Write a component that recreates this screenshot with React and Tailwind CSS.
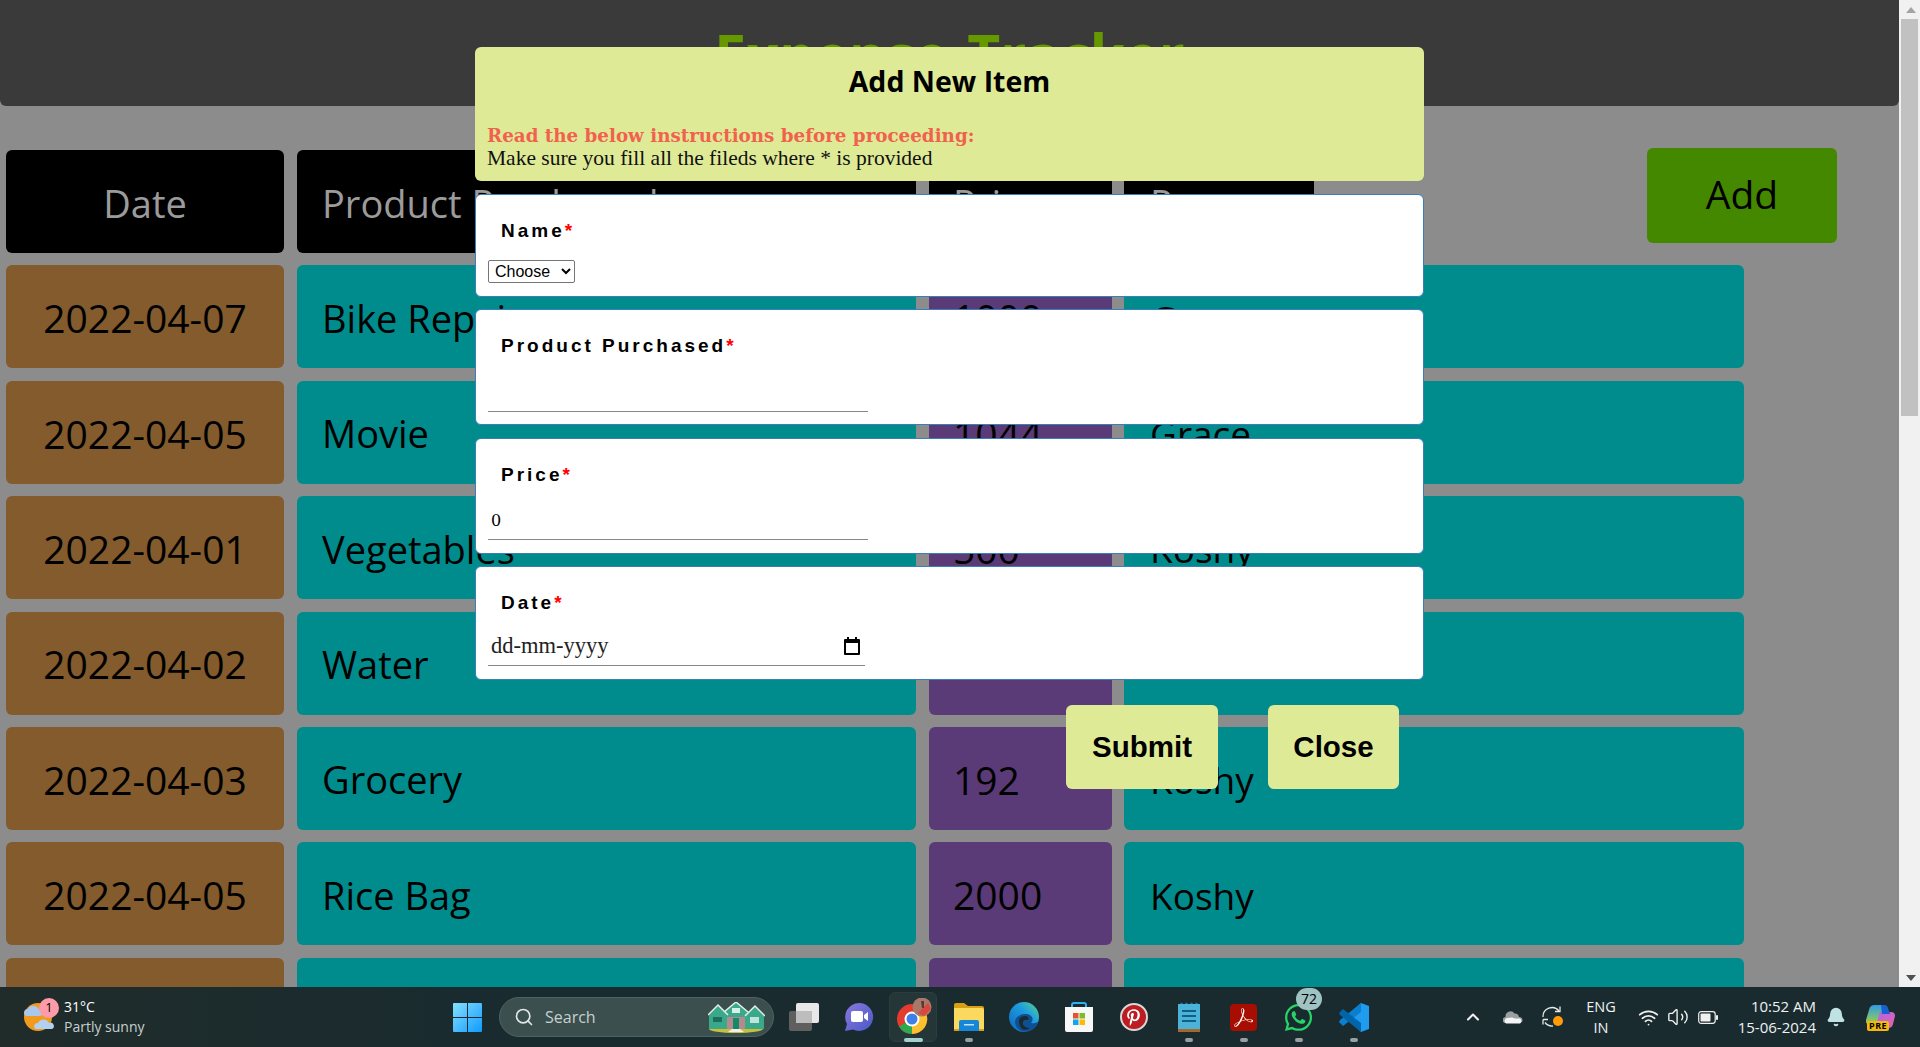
import React from 'react';
import { Search, ChevronUp, Wifi, Volume2, Bell } from 'lucide-react';
import { FaPinterestP, FaWhatsapp } from 'react-icons/fa';
import { SiAdobeacrobatreader } from 'react-icons/si';

const rows = [
    { date: '2022-04-07', product: 'Bike Repair', price: '1000', by: 'Grace' },
    { date: '2022-04-05', product: 'Movie', price: '1044', by: 'Grace' },
    { date: '2022-04-01', product: 'Vegetables', price: '500', by: 'Koshy' },
    { date: '2022-04-02', product: 'Water', price: '', by: '' },
    { date: '2022-04-03', product: 'Grocery', price: '192', by: 'Koshy' },
    { date: '2022-04-05', product: 'Rice Bag', price: '2000', by: 'Koshy' },
    { date: '', product: '', price: '', by: '' },
];

const Row = ({ item }) => (
    <div className="flex h-[103px] shrink-0 text-[38px] text-black">
        <div className="w-[278px] rounded-md bg-[#835b2c] flex items-center justify-center pt-[3px] text-[39px]">{item.date}</div>
        <div className="ml-[13px] w-[619px] rounded-md bg-[#008c8c] flex items-center pl-[25px] pt-[3px]">{item.product}</div>
        <div className="ml-[13px] w-[183px] rounded-md bg-[#5b3a78] flex items-center pl-[24px] pt-[3px] text-[39px]">{item.price}</div>
        <div className="ml-[12px] w-[620px] rounded-md bg-[#008c8c] flex items-center pl-[26px] pt-[3px] text-[37px]">{item.by}</div>
    </div>
);

const Label = ({ text }) => (
    <label className="block pl-[13px] h-[24px] leading-[24px] text-[19px] font-bold tracking-[3px] text-black font-['Liberation_Sans',sans-serif]">
        {text}<span className="text-[#ff0000]">*</span>
    </label>
);

const Card = ({ className, children }) => (
    <div className={`rounded-md border border-[#3b7fb8] bg-white pl-[12px] pt-[24px] ${className}`}>{children}</div>
);

const Modal = () => (
    <div className="absolute left-[475px] top-[47px] z-10 flex w-[949px] flex-col">
        <div className="h-[134px] rounded-md bg-[#dfea96] pt-[14px]">
            <h2 className="text-center h-[40px] leading-[40px] text-[28.5px] font-bold text-black">Add New Item</h2>
            <p className="mt-[24px] pl-[12px] h-[22px] leading-[22px] text-[18.3px] font-bold text-[#f0624f] font-['DejaVu_Serif',serif]">Read the below instructions before proceeding:</p>
            <p className="pl-[12px] h-[22px] leading-[22px] text-[21.5px] text-[#111] font-['Liberation_Serif',serif]">Make sure you fill all the fileds where * is provided</p>
        </div>

        <Card className="mt-[13px] h-[103px]">
            <Label text="Name" />
            <select defaultValue="Choose" className="mt-[17px] block h-[23px] w-[87px] rounded-[2px] border border-[#767676] pl-[2px] text-[16px] text-black font-['Liberation_Sans',sans-serif]">
                <option>Choose</option>
            </select>
        </Card>

        <Card className="mt-[12px] h-[116px]">
            <Label text="Product Purchased" />
            <input type="text" className="mt-[20px] block h-[34px] w-[380px] border-b-[1.5px] border-[#888] outline-none" />
        </Card>

        <Card className="mt-[13px] h-[116px]">
            <Label text="Price" />
            <input type="text" defaultValue="0" className="mt-[19px] block h-[34px] w-[380px] border-b-[1.5px] border-[#888] pl-[3px] pb-[4px] text-[16px] text-black outline-none font-['DejaVu_Serif',serif]" />
        </Card>

        <Card className="mt-[12px] h-[114px]">
            <Label text="Date" />
            <div className="mt-[17px] flex h-[34px] w-[377px] items-center justify-between border-b-[1.5px] border-[#888] pb-[5px] pl-[3px] pr-[5px] text-[22.5px] text-[#222] font-['Liberation_Serif',serif]">
                <span>dd-mm-yyyy</span>
                <svg width="16" height="18" viewBox="0 0 16 18">
                    <path d="M3 0h2v2h6V0h2v2h2a1 1 0 0 1 1 1v14a1 1 0 0 1-1 1H1a1 1 0 0 1-1-1V3a1 1 0 0 1 1-1h2zM2 6v10h12V6z" fill="#000" />
                </svg>
            </div>
        </Card>

        <div className="mt-[25px] flex pl-[591px] text-[29.5px] font-bold text-black font-['Liberation_Sans',sans-serif]">
            <button className="h-[84px] w-[152px] rounded-md bg-[#dfea96] pt-[1px]">Submit</button>
            <button className="ml-[50px] h-[84px] w-[131px] rounded-md bg-[#dfea96] pt-[1px]">Close</button>
        </div>
    </div>
);

const Scrollbar = () => (
    <div className="flex w-[21px] shrink-0 flex-col bg-[#f1f1f1] pl-[2px]">
        <div className="flex h-[19px] items-center justify-center">
            <div className="h-0 w-0 border-x-[5px] border-b-[6px] border-x-transparent border-b-[#a3a3a3]" />
        </div>
        <div className="h-[397px] w-[17px] bg-[#c1c1c1]" />
        <div className="mt-auto flex h-[19px] items-center justify-center">
            <div className="h-0 w-0 border-x-[5px] border-t-[6px] border-x-transparent border-t-[#505050]" />
        </div>
    </div>
);

const TaskIcon = ({ children, dot, active }) => (
    <div className="relative flex h-full w-[55px] shrink-0 items-center justify-center">
        {active && <div className="absolute left-[3px] top-[5px] h-[50px] w-[48px] rounded-md border border-[#2c3d40] bg-[#253639]" />}
        <div className="relative flex items-center justify-center">{children}</div>
        {dot && <div className={`absolute top-[51px] h-[4px] rounded-full ${active ? 'w-[19px] bg-[#a5d0d0]' : 'w-[8px] bg-[#9a9f9f]'}`} />}
    </div>
);

const WindowsLogo = () => (
    <svg width="29" height="29" viewBox="0 0 29 29">
        <defs>
            <linearGradient id="win" x1="0" y1="0" x2="1" y2="1">
                <stop offset="0" stopColor="#86e0ff" />
                <stop offset="1" stopColor="#0f9bff" />
            </linearGradient>
        </defs>
        <path d="M0 1a1 1 0 0 1 1-1h13v14H0zM15 0h13a1 1 0 0 1 1 1v13H15zM0 15h14v14H1a1 1 0 0 1-1-1zM15 15h14v13a1 1 0 0 1-1 1H15z" fill="url(#win)" />
    </svg>
);

const Houses = () => (
    <svg width="57" height="31" viewBox="0 0 57 31">
        <ellipse cx="28" cy="27" rx="27" ry="4" fill="#c4c23a" />
        <path d="M1 12 L10 3 L19 12 V27 H1Z" fill="#3aa88a" />
        <path d="M38 13 L47 4 L56 13 V27 H38Z" fill="#3aa88a" />
        <path d="M17 9 L28 0 L39 9 V27 H17Z" fill="#3aa88a" />
        <path d="M0 13 L10 3 L20 13 M16 10 L28 0 L40 10 M37 14 L47 4 L57 14" fill="none" stroke="#e8efe9" strokeWidth="1.5" />
        <rect x="19" y="15" width="18" height="12" fill="#b48a90" />
        <rect x="25" y="16" width="6" height="11" fill="#128a68" />
        <rect x="24" y="6" width="8" height="5" fill="#d8efe8" />
        <rect x="5" y="15" width="9" height="5" fill="#1e6e5c" />
        <rect x="42" y="15" width="9" height="6" fill="#bfe4dc" />
        <path d="M24 27 h8 l4 3 h-16z" fill="#f0f0e8" />
    </svg>
);

const TaskView = () => (
    <svg width="30" height="28" viewBox="0 0 30 28">
        <rect x="0" y="8" width="23" height="20" rx="2" fill="#5f5f5f" />
        <rect x="7" y="0" width="23" height="20" rx="2" fill="#e8e8e8" />
        <rect x="7" y="8" width="16" height="12" fill="#bdbdbd" />
    </svg>
);

const Meet = () => (
    <svg width="30" height="30" viewBox="0 0 30 30">
        <defs>
            <linearGradient id="meet" x1="0" y1="0" x2="1" y2="1">
                <stop offset="0" stopColor="#8a78dd" />
                <stop offset="1" stopColor="#4a58c8" />
            </linearGradient>
        </defs>
        <path d="M15 1a14 14 0 1 1-6 26.6L1 29l2-7A14 14 0 0 1 15 1z" fill="url(#meet)" />
        <rect x="7" y="9" width="12" height="11" rx="2" fill="#fff" />
        <path d="M20 13l4-3v9l-4-3z" fill="#fff" />
    </svg>
);

const Chrome = () => (
    <svg width="36" height="38" viewBox="0 0 36 38">
        <circle cx="16" cy="21" r="15" fill="#e33b2e" />
        <path d="M16 21 L3 28.5 A15 15 0 0 0 16 36 L 23.5 24Z" fill="#2fa84f" />
        <path d="M16 21 L16 36 A15 15 0 0 0 30 15 L 16 15Z" fill="#fbc02d" />
        <circle cx="16" cy="21" r="7.5" fill="#fff" />
        <circle cx="16" cy="21" r="5.5" fill="#3f7fe8" />
        <circle cx="26" cy="9" r="9.5" fill="#a8786a" />
        <path d="M22 15 L32 5 L35 11 L28 18Z" fill="#d9473f" />
        <path d="M25 3 h3 v7 h-2z" fill="#5a3a35" />
    </svg>
);

const Folder = () => (
    <svg width="30" height="30" viewBox="0 0 30 30">
        <path d="M0 3a2 2 0 0 1 2-2h8l4 3h14a2 2 0 0 1 2 2v3H0z" fill="#d9a013" />
        <path d="M0 6h28a2 2 0 0 1 2 2v20H0z" fill="#fbd95f" />
        <rect x="0" y="27" width="30" height="2" fill="#d9a013" />
        <path d="M5 29v-9a2 2 0 0 1 2-2h16a2 2 0 0 1 2 2v9z" fill="#1687d8" />
        <rect x="10" y="22" width="10" height="1.5" fill="#bfe3f7" />
    </svg>
);

const Edge = () => (
    <svg width="30" height="30" viewBox="0 0 30 30">
        <defs>
            <linearGradient id="edgeA" x1="0" y1="1" x2="1" y2="0">
                <stop offset="0" stopColor="#0c67b8" />
                <stop offset="0.6" stopColor="#1e9be0" />
                <stop offset="1" stopColor="#58d58a" />
            </linearGradient>
        </defs>
        <circle cx="15" cy="15" r="15" fill="url(#edgeA)" />
        <path d="M30 17c0 4-5 5-8 4 3-3 2-9-6-9-6 0-10 4-10 8 0 5 5 10 11 9.6C24 29 29 24 30 17z" fill="#0f4f93" />
        <path d="M10 19c0-3 3-5 6-5 3 0 4 2 3 4-2-1-6 0-5 4 .5 2 3 4 7 4-3 2-6 2-8 1-2-2-3-5-3-8z" fill="#1a2b2f" />
    </svg>
);

const Store = () => (
    <svg width="30" height="31" viewBox="0 0 30 31">
        <path d="M8 7V3a2 2 0 0 1 2-2h10a2 2 0 0 1 2 2v4" fill="none" stroke="#2fb0ef" strokeWidth="2" />
        <path d="M1 5h28v23a2 2 0 0 1-2 2H3a2 2 0 0 1-2-2z" fill="#f7f7f7" />
        <rect x="9" y="11" width="5.5" height="5.5" fill="#e8552d" />
        <rect x="15.5" y="11" width="5.5" height="5.5" fill="#7fba2a" />
        <rect x="9" y="17.5" width="5.5" height="5.5" fill="#10a5ef" />
        <rect x="15.5" y="17.5" width="5.5" height="5.5" fill="#ffb900" />
    </svg>
);

const Notepad = () => (
    <svg width="22" height="30" viewBox="0 0 22 30">
        <rect x="0" y="2" width="22" height="25" fill="#4bb3d8" />
        <rect x="0" y="27" width="22" height="3" fill="#a5682a" />
        <path d="M2 2a1.5 1.5 0 0 1 3 0M7 2a1.5 1.5 0 0 1 3 0M12 2a1.5 1.5 0 0 1 3 0M17 2a1.5 1.5 0 0 1 3 0" fill="#1b6f96" />
        <rect x="4" y="8" width="14" height="2" fill="#125e86" />
        <rect x="4" y="13" width="14" height="2" fill="#125e86" />
        <rect x="4" y="18" width="14" height="2" fill="#125e86" />
    </svg>
);

const VsCode = () => (
    <svg width="30" height="31" viewBox="0 0 30 31">
        <path d="M22 1 L30 4 V27 L22 30 L9 17 V14z" fill="#1f9cf0" />
        <path d="M22 1 L1 18 L0 20 L4 24 L22 10z" fill="#0a7fd0" />
        <path d="M22 30 L1 13 L0 11 L4 7 L22 21z" fill="#0065a9" />
    </svg>
);

const OneDrive = () => (
    <svg width="20" height="14" viewBox="0 0 20 14">
        <path d="M3 13a3 3 0 0 1-.5-6 5 5 0 0 1 9-3.5A4 4 0 0 1 16 7a3 3 0 0 1 1 6z" fill="#9a9f9f" />
        <path d="M3 13.5a3 3 0 0 1 1-5.5l5-.5 3 1 5 0a3 3 0 0 1 0 5z" fill="#f4f4f4" />
    </svg>
);

const Sync = () => (
    <svg width="22" height="22" viewBox="0 0 22 22" fill="none" stroke="#e4e8e8" strokeWidth="1.3">
        <path d="M1 11a9 9 0 0 1 16-6" />
        <path d="M18 0.5v5h-5" />
        <path d="M11 20a9 9 0 0 1-8-3.5" />
        <path d="M1 13.5h5M1 13.5v5" />
        <circle cx="16" cy="15" r="5" fill="#ff9a0a" stroke="none" />
    </svg>
);

const Battery = () => (
    <svg width="20" height="13" viewBox="0 0 20 13" fill="none">
        <rect x="0.7" y="0.7" width="16.5" height="11.6" rx="2.5" stroke="#f0f0f0" strokeWidth="1.2" />
        <rect x="2.5" y="2.5" width="10" height="8" rx="1" fill="#f0f0f0" />
        <rect x="18" y="4" width="2" height="5" rx="1" fill="#f0f0f0" />
    </svg>
);

const Copilot = () => (
    <svg width="29" height="25" viewBox="0 0 29 25">
        <defs>
            <linearGradient id="copA" x1="0" y1="0" x2="0" y2="1">
                <stop offset="0" stopColor="#2f9be8" />
                <stop offset="1" stopColor="#a5d43a" />
            </linearGradient>
            <linearGradient id="copB" x1="0" y1="0" x2="1" y2="1">
                <stop offset="0" stopColor="#a56be8" />
                <stop offset="1" stopColor="#ef5da8" />
            </linearGradient>
        </defs>
        <path d="M9 0h10l-7 20H4a4 4 0 0 1-4-5l3-10a6 6 0 0 1 6-5z" fill="url(#copA)" />
        <path d="M14 7h11a4 4 0 0 1 4 4l-2 8a5 5 0 0 1-5 4H9z" fill="url(#copB)" />
        <path d="M15 0h3a4 4 0 0 1 4 3l2 6h-8z" fill="#1a5fd0" />
    </svg>
);

const Taskbar = () => (
    <div className="flex h-[60px] shrink-0 items-center bg-[#1a2b2f] text-white font-['Open_Sans',sans-serif]">
        <div className="flex h-full w-[449px] shrink-0 items-center bg-gradient-to-r from-[#1f2c2a] to-[#1a2b2f] pl-[23px]">
            <div className="relative h-[34px] w-[41px] shrink-0">
                <svg width="32" height="34" viewBox="0 0 32 34">
                    <circle cx="15" cy="17" r="14" fill="#f09a1e" />
                    <path d="M1 13a4 4 0 0 1 4-4 6 6 0 0 1 11 1 3 3 0 0 1 1 6H3a3 3 0 0 1-2-3z" fill="#a9c8ee" />
                    <path d="M11 27a4 4 0 0 1 4-4 6 6 0 0 1 11 0 3 3 0 0 1 3 6H13a3 3 0 0 1-2-2z" fill="#b4d0f0" />
                </svg>
                <span className="absolute left-[16px] -top-[2px] flex h-[20px] w-[20px] items-center justify-center rounded-full bg-[#ff9aa8] text-[13px] text-black">1</span>
            </div>
            <div className="leading-[20px]">
                <div className="text-[14px] text-white">31°C</div>
                <div className="text-[14px] text-[#c8cfd0]">Partly sunny</div>
            </div>
        </div>

        <div className="flex w-[36px] shrink-0 justify-center"><WindowsLogo /></div>

        <div className="ml-[14px] flex h-[40px] w-[275px] shrink-0 items-center rounded-full border border-[#4d6361] bg-[#3a4f4e] pl-[14px] pr-[8px]">
            <Search size={20} strokeWidth={2} className="text-[#e0e6e6]" />
            <span className="ml-[11px] text-[16px] text-[#c7d0cf]">Search</span>
            <div className="ml-auto"><Houses /></div>
        </div>

        <div className="ml-[2px] flex h-full shrink-0">
            <TaskIcon><TaskView /></TaskIcon>
            <TaskIcon><Meet /></TaskIcon>
            <TaskIcon dot active><Chrome /></TaskIcon>
            <TaskIcon dot><Folder /></TaskIcon>
            <TaskIcon><Edge /></TaskIcon>
            <TaskIcon><Store /></TaskIcon>
            <TaskIcon>
                <div className="flex h-[28px] w-[28px] items-center justify-center rounded-full border-2 border-[#d8d8d8] bg-[#bd1c22] text-white">
                    <FaPinterestP size={17} />
                </div>
            </TaskIcon>
            <TaskIcon dot><Notepad /></TaskIcon>
            <TaskIcon dot>
                <div className="flex h-[27px] w-[27px] items-center justify-center rounded-[4px] bg-[#a80d02] text-white">
                    <SiAdobeacrobatreader size={19} />
                </div>
            </TaskIcon>
            <TaskIcon dot>
                <FaWhatsapp size={31} className="text-[#25d366]" />
                <span className="absolute -right-[8px] -top-[14px] flex h-[22px] w-[26px] items-center justify-center rounded-full bg-[#9fc2c2] text-[14px] text-black">72</span>
            </TaskIcon>
            <TaskIcon dot><VsCode /></TaskIcon>
        </div>

        <div className="flex-1" />

        <div className="flex h-full shrink-0 items-center">
            <div className="flex w-[40px] justify-center"><ChevronUp size={20} strokeWidth={2.5} className="text-[#f0f0f0]" /></div>
            <div className="flex w-[40px] justify-center"><OneDrive /></div>
            <div className="flex w-[40px] justify-center"><Sync /></div>
            <div className="w-[56px] text-center text-[14.5px] leading-[21px] text-[#eef2f2]">ENG<br />IN</div>
            <div className="ml-[4px] flex w-[30px] justify-center"><Wifi size={21} className="text-[#f0f0f0]" /></div>
            <div className="flex w-[30px] justify-center"><Volume2 size={22} strokeWidth={1.5} className="text-[#f0f0f0]" /></div>
            <div className="flex w-[30px] justify-center"><Battery /></div>
            <div className="w-[93px] text-right text-[15px] leading-[21px] text-[#eef2f2]">10:52 AM<br />15-06-2024</div>
            <div className="flex w-[39px] justify-center"><Bell size={20} fill="#bfe3e3" className="text-[#bfe3e3]" /></div>
            <div className="relative flex w-[50px] justify-center">
                <Copilot />
                <span className="absolute left-[12px] top-[16px] rounded-[2px] bg-[#f3b90f] px-[2px] text-[9px] font-bold leading-[10px] tracking-[0.5px] text-black">PRE</span>
            </div>
            <div className="w-[15px]" />
        </div>
    </div>
);

export default function App() {
    return (
        <div className="relative flex h-[1047px] w-[1920px] flex-col overflow-hidden bg-[#f1f1f1] font-['Open_Sans',sans-serif]">
            <div className="flex h-[987px] shrink-0">
                <div className="w-[1899px] shrink-0 overflow-hidden bg-[#8c8c8c]">
                    <div className="flex h-[106px] justify-center rounded-b-md bg-[#3a3a3a]">
                        <h1 className="pt-[13px] text-[57px] font-bold leading-[82px] text-[#669900] [word-spacing:4px]">Expense Tracker</h1>
                    </div>

                    <div className="mt-[44px] flex flex-col gap-[12.4px] pl-[6px]">
                        <div className="flex h-[103px] shrink-0 text-[38px] text-[#9b9b9b]">
                            <div className="w-[278px] rounded-md bg-black flex items-center justify-center pt-[4px]">Date</div>
                            <div className="ml-[13px] w-[619px] rounded-md bg-black flex items-center pl-[25px] pt-[4px]">Product Purchased</div>
                            <div className="ml-[13px] w-[183px] rounded-md bg-black flex items-center pl-[24px] pt-[4px]">Price</div>
                            <div className="ml-[12px] w-[190px] rounded-md bg-black flex items-center pl-[26px] pt-[4px]">Payer</div>
                            <button className="ml-[333px] -mt-[2px] h-[95px] w-[190px] rounded-md bg-[#448800] pb-[2px] text-[39px] text-black">Add</button>
                        </div>
                        {rows.map((item, i) => <Row key={i} item={item} />)}
                    </div>
                </div>
                <Scrollbar />
            </div>

            <Taskbar />
            <Modal />
        </div>
    );
}
